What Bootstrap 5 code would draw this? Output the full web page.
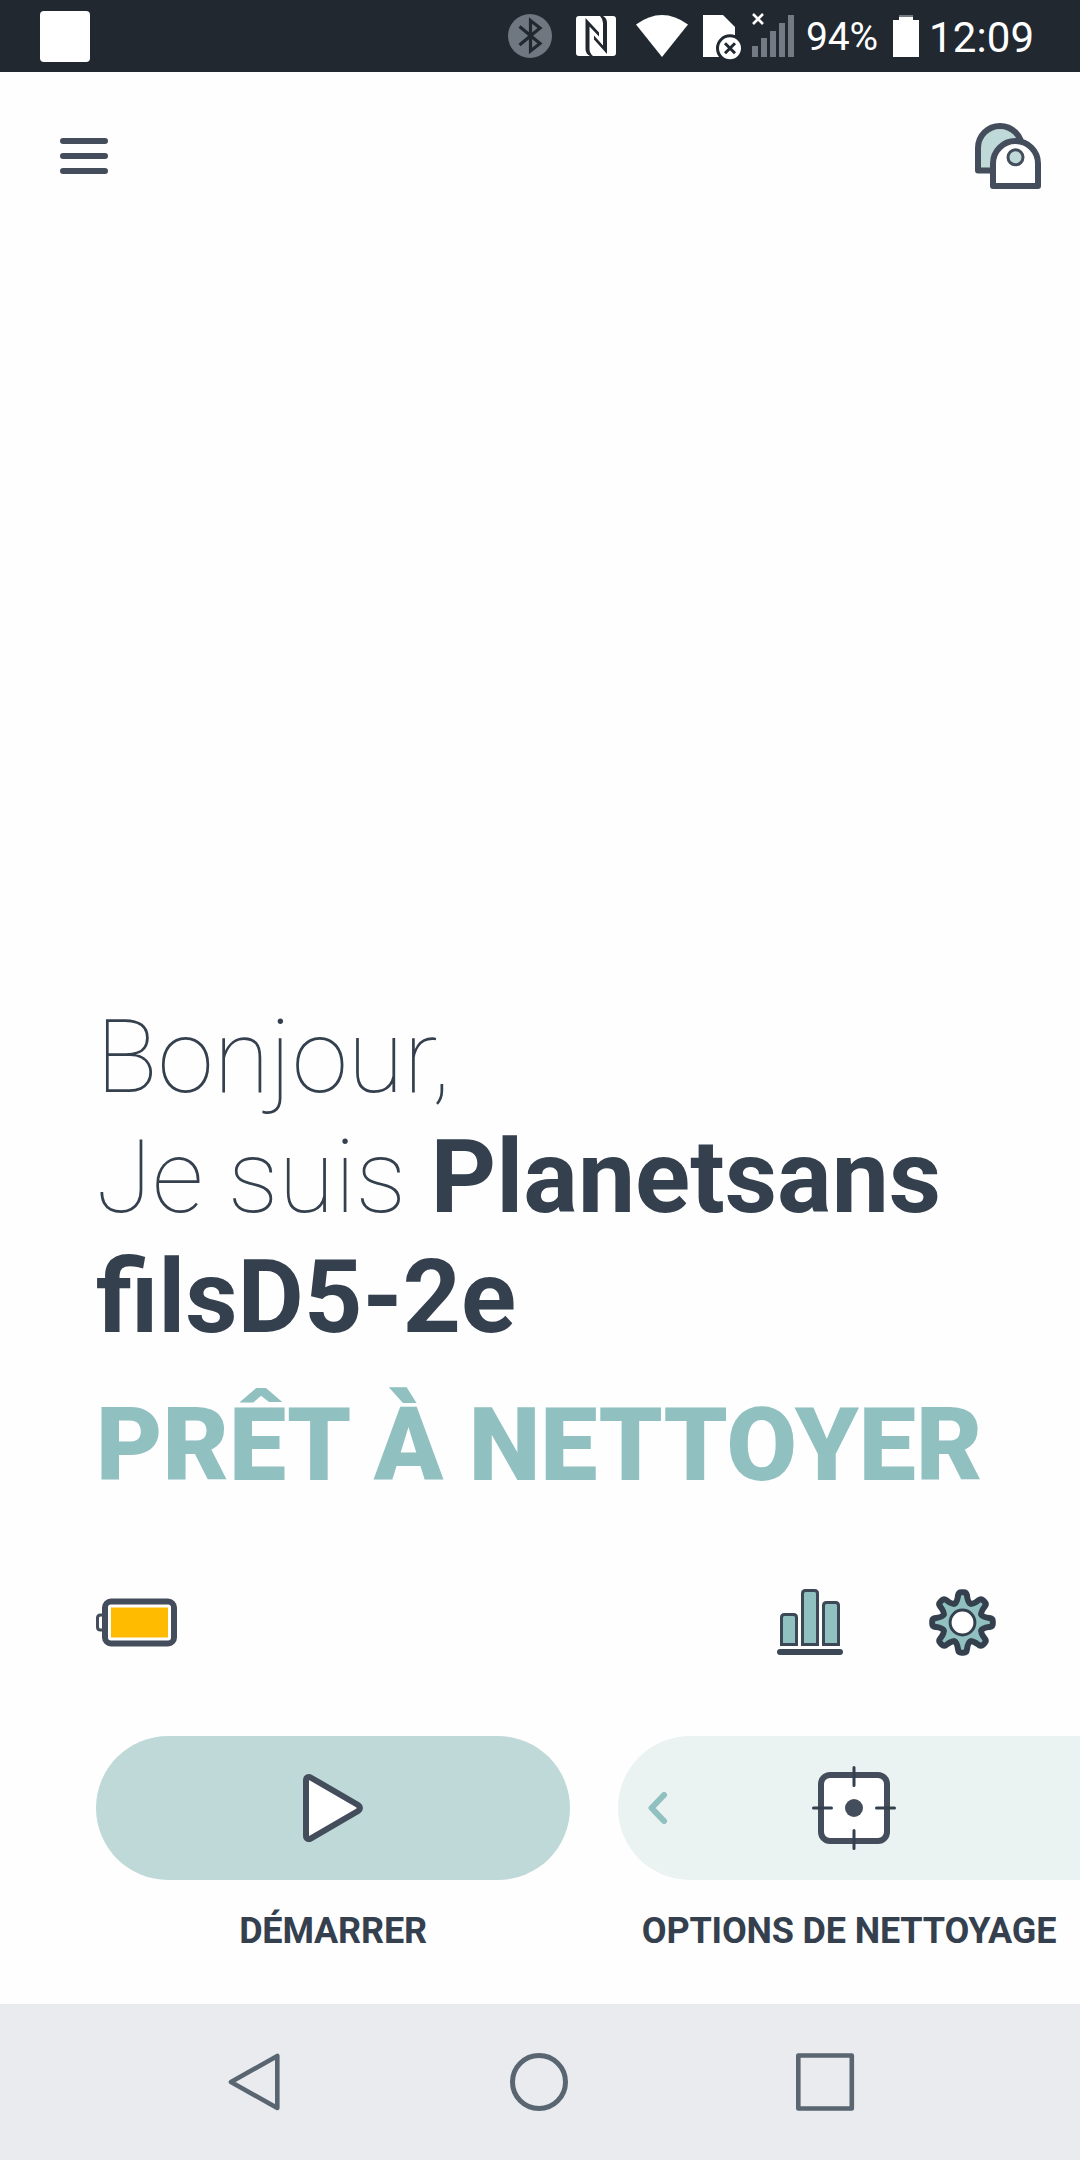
<!DOCTYPE html>
<html lang="fr">
<head>
<meta charset="utf-8">
<meta name="viewport" content="width=device-width, initial-scale=1">
<title>Planetsans filsD5-2e</title>
<link rel="stylesheet" href="https://cdn.jsdelivr.net/npm/bootstrap@5.3.0/dist/css/bootstrap.min.css">
<style>
  :root { --ink: #35404e; --line: #434d5b; --teal: #90c1c0; --mint: #bfd9d8; --pale: #eaf2f2; }
  body { font-family: Roboto, "Liberation Sans", sans-serif; color: var(--ink); background: #fefefe; width: 1080px; height: 2160px; }
  svg { display: block; flex: none; overflow: visible; }
  .statusbar { height: 72px; background: #212830; color: #fff; padding: 0 46px 0 40px; }
  .notif { width: 50px; height: 51px; border-radius: 4px; background: #fff; }
  .sb-nfc { margin-left: 24px; }
  .sb-wifi { margin-left: 20px; }
  .sb-sim { margin-left: 15px; }
  .sb-signal { margin-left: 11px; }
  .pct { width: 99px; padding: 3px 3px 0 0; font-size: 39px; letter-spacing: -.1px; }
  .clock { width: 115px; padding-left: 10px; padding-top: 2px; font-size: 42px; letter-spacing: .1px; }
  .topbar { padding: 51px 39px 0 60px; height: 117px; }
  .burger { width: 48px; gap: 9px; padding-top: 15px; }
  .burger span { height: 6px; border-radius: 3px; background: var(--line); }
  .hello { font-size: 102px; line-height: 120px; padding-left: 96px; }
  .hello h1 { font-size: inherit; line-height: inherit; font-weight: 100; color: var(--ink); }
  .hello strong { font-weight: 700; }
  .state { font-weight: 900; color: var(--teal); margin-top: 28px; white-space: nowrap; }
  .tools { padding: 0 84px 0 96px; height: 67px; margin-top: 84px; }
  .tools .gap-wide { gap: 86px; }
  .actions { padding-left: 96px; gap: 48px; margin-top: 80px; margin-bottom: 52px; }
  .act-main { width: 474px; }
  .pill { height: 144px; border: 0; }
  .pill-main { background: var(--mint); border-radius: 72px; }
  .pill-more { background: var(--pale); border-radius: 72px 0 0 72px; padding-left: 30px; }
  .pill-more .aim { margin-left: 145px; }
  .cap { font-size: 36px; line-height: 42px; font-weight: 700; letter-spacing: -.17px; margin-top: 30px; white-space: nowrap; }
  .sysnav { height: 156px; background: #e9ebee; padding: 0 225px 0 228px; }
</style>
<script src="https://cdn.jsdelivr.net/npm/bootstrap@5.3.0/dist/js/bootstrap.bundle.min.js"></script>
</head>
<body class="d-flex flex-column overflow-hidden">

<div class="statusbar d-flex align-items-center flex-shrink-0">
  <div class="notif me-auto"></div>
  <!-- bluetooth -->
  <svg width="44" height="44" viewBox="0 0 44 44"><circle cx="22" cy="22" r="22" fill="#6f7780"/><path d="M11.5 12.500 32 29.500 22.500 37V6.500L32 14 11.500 31" fill="none" stroke="#212830" stroke-width="3.200"/></svg>
  <!-- nfc -->
  <svg class="sb-nfc" width="40" height="44" viewBox="0 -2 40 44"><rect width="40" height="40" rx="3" fill="#fff"/><path fill="#212830" d="M9.500 2 23 16.500V20.500L13.500 10.500V33Q13.500 37 17 40H14Q9.500 38 9.500 33ZM31 38 18 23.500V19.500L27 29.500V7Q27 3 24 0H27Q31 2 31 7Z"/></svg>
  <!-- wifi -->
  <svg class="sb-wifi" width="52" height="44" viewBox="0 -1 52 44"><path fill="#fff" d="M0 9.500Q26-9.500 52 9.500L26 42Z"/></svg>
  <!-- sim card -->
  <svg class="sb-sim" width="38" height="44" viewBox="0 -1 38 44"><path fill="#fff" d="M0 0H20L32 12V42H0Z"/><circle cx="27" cy="33.300" r="12.500" fill="#fff" stroke="#212830" stroke-width="3"/><path d="M22 28.300l10 10m0-10-10 10" stroke="#212830" stroke-width="3"/></svg>
  <!-- signal -->
  <svg class="sb-signal" width="42" height="44" viewBox="0 -1 42 44"><path fill="#737a83" d="M0 31H6V42H0ZM9 23H15V42H9ZM18 16H24V42H18ZM27 8H33V42H27ZM36 0H42V42H36Z"/><path d="M1-1l10 10m0-10-10 10" stroke="#fff" stroke-width="2.600"/></svg>
  <div class="pct text-center">94%</div>
  <svg width="26" height="44" viewBox="0 -1 26 44"><path fill="#fff" d="M6 2H20V5H26V42H0V5H6Z"/><path fill="#737a83" d="M6 0H20V2H6Z"/></svg>
  <div class="clock">12:09</div>
</div>

<header class="topbar d-flex justify-content-between align-items-start">
  <div class="burger d-flex flex-column"><span></span><span></span><span></span></div>
  <svg width="66" height="66" viewBox="0 0 66 66" stroke="#434d5b" stroke-width="6" stroke-linejoin="round"><path d="M3 47.500V25a22 22 0 0 1 44 0V47.500Z" fill="#bfd9d8"/><path d="M18 63V40.500a22.500 22.500 0 0 1 45 0V63Z" fill="#fff"/><circle cx="40.500" cy="34.300" r="7.500" fill="#bfd9d8" stroke-width="3"/></svg>
</header>

<main class="mt-auto">
  <section class="hello">
    <h1 class="m-0">Bonjour,<br>Je suis <strong>Planetsans<br>filsD5-2e</strong></h1>
    <div class="state">PRÊT À NETTOYER</div>
  </section>

  <section class="tools d-flex justify-content-between align-items-center">
    <svg width="81" height="48" viewBox="0 0.500 81 48" fill="none" stroke="#434d5b"><path d="M7 16.500H4.500Q1.500 16.500 1.500 19.500V28.500Q1.500 31.500 4.500 31.500H7" stroke-width="3"/><rect x="9" y="3" width="69" height="42" rx="6" fill="#fff" stroke-width="6"/><path d="M15 9H72V39H15Z" fill="#fb0" stroke="none"/></svg>
    <div class="d-flex gap-wide">
      <svg width="66" height="67" viewBox="0 0 66 67" fill="#90c1c0" stroke="#3d4856" stroke-width="3"><path d="M4.500 55.500V28.500q0-3 3-3h9q3 0 3 3v27ZM25.500 55.500V4.500q0-3 3-3h9q3 0 3 3v51ZM46.500 55.500V16.500q0-3 3-3h9q3 0 3 3v39Z"/><path d="M3 63H63" stroke-width="6" stroke-linecap="round"/></svg>
      <svg width="67" height="67" viewBox="-33.500 -33.500 67 67"><defs><path id="tooth" d="M-7.850-18.900C-5.300-20-4.900-24-4.400-27.200Q-4-30.300-1-30.300H1Q4-30.300 4.400-27.200C4.900-24 5.300-20 7.850-18.900" stroke-linecap="round"/></defs><circle r="20" fill="#90c1c0"/><g fill="#90c1c0" stroke="#35404e" stroke-width="6"><use href="#tooth"/><use href="#tooth" transform="rotate(45)"/><use href="#tooth" transform="rotate(90)"/><use href="#tooth" transform="rotate(135)"/><use href="#tooth" transform="rotate(180)"/><use href="#tooth" transform="rotate(225)"/><use href="#tooth" transform="rotate(270)"/><use href="#tooth" transform="rotate(315)"/></g><circle r="12.400" fill="#fff" stroke="#35404e" stroke-width="3"/></svg>
    </div>
  </section>

  <section class="actions d-flex">
    <div class="act-main text-center">
      <button class="pill pill-main w-100 p-0 d-flex align-items-center justify-content-center"><svg width="60" height="68" viewBox="0 0 60 68"><path d="M3 6.500C3 3 5.500 2.200 8 3.700L55 31Q59 34 55 37L8 64.300C5.500 65.800 3 65 3 61.500Z" fill="#fff" stroke="#434d5b" stroke-width="6"/></svg></button>
      <div class="cap">DÉMARRER</div>
    </div>
    <div class="flex-grow-1 text-center">
      <button class="pill pill-more w-100 py-0 pe-0 d-flex align-items-center">
        <svg width="19" height="32" viewBox="0 0 19 32"><path d="M16 3 3.500 16 16 29" fill="none" stroke="#90c1c0" stroke-width="6" stroke-linecap="round" stroke-linejoin="round"/></svg>
        <svg class="aim" width="84" height="84" viewBox="0 0 84 84" stroke="#434d5b"><rect x="9" y="9" width="66" height="66" rx="9" fill="#fff" stroke-width="6"/><path d="M42 1.500V19.500M42 64.500V82.500M1.500 42H19.500M64.500 42H82.500" stroke="#35404e" stroke-width="3" stroke-linecap="round"/><circle cx="42" cy="42" r="9" fill="#434d5b" stroke="none"/></svg>
      </button>
      <div class="cap">OPTIONS DE NETTOYAGE</div>
    </div>
  </section>
</main>

<nav class="sysnav d-flex align-items-center justify-content-between flex-shrink-0">
  <svg width="52" height="58" viewBox="0 0 52 58" fill="none" stroke="#596570" stroke-width="4.600"><path d="M49.300 3V55L3 29Z" stroke-linejoin="round"/></svg>
  <svg width="58" height="58" viewBox="0 0 58 58" fill="none" stroke="#596570" stroke-width="5"><circle cx="30" cy="29" r="26.500"/></svg>
  <svg width="59" height="58" viewBox="0 0 59 58" fill="none" stroke="#596570" stroke-width="4.600"><rect x="2.300" y="2.500" width="53.500" height="53" stroke-linejoin="round"/></svg>
</nav>
</body>
</html>
